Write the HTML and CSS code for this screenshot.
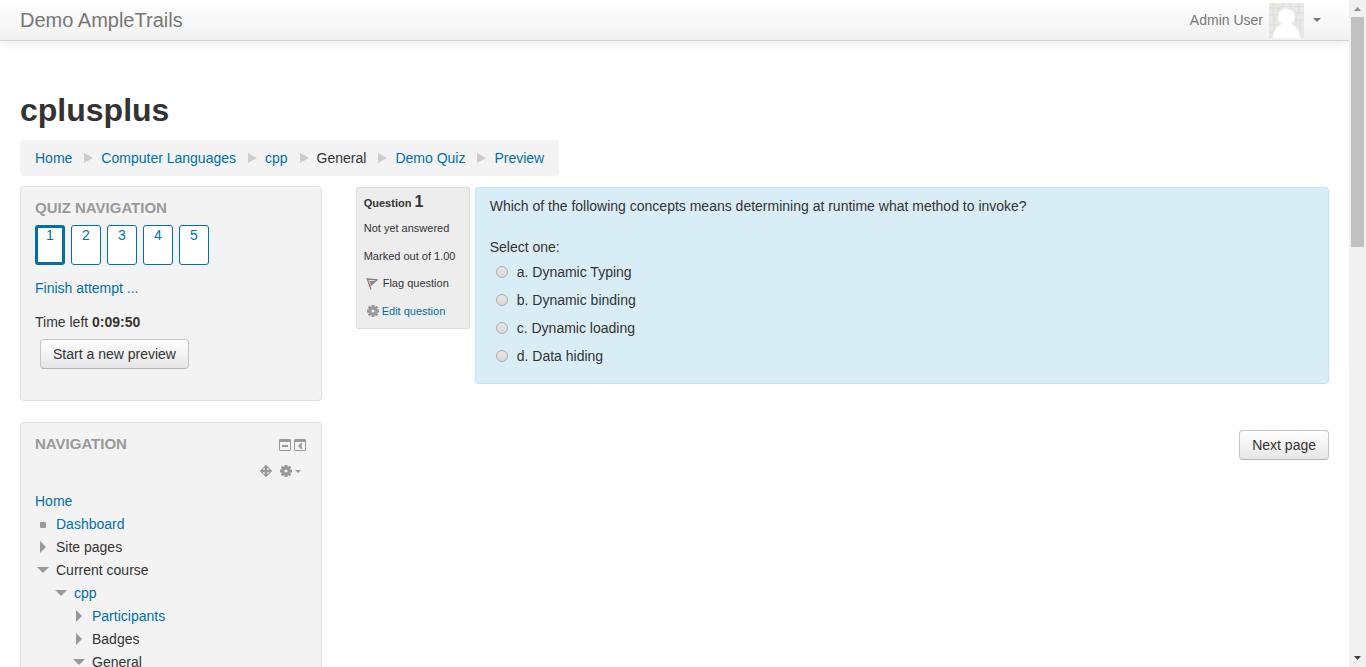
FILE: index.html
```
<!DOCTYPE html>
<html lang="en">
<head>
    <meta charset="UTF-8">
    <meta name="viewport" content="width=device-width, initial-scale=1.0">
    <title>Demo Quiz</title>
    <link rel="stylesheet" href="styles.css">
</head>
<body>
    <div class="page">
        <header class="navbar">
            <a class="brand" href="#">Demo AmpleTrails</a>
            <a class="usermenu" href="#">
                <span>Admin User</span>
                <svg class="avatar" width="35" height="35" viewBox="0 0 35 35">
                    <rect width="35" height="35" fill="#e8e8e7"/>
                    <path d="M0 5h13M4 0v12M0 12h9M9 5v7M0 22h8M5 12v16M26 4h9M30 0v10M25 10h10M27 10v12M27 17h8M31 17v10M0 29h6M14 0v4M21 0v5" fill="none" stroke="#dcdcdb"/>
                    <path d="M4 35c0-7 4-12 9-14-2-1-4-4-4-7 0-5 4-8 8.500-8s8.500 3 8.500 8c0 3-2 6-4 7 5 2 9 7 9 14z" fill="#fff"/>
                </svg>
                <span class="caret"></span>
            </a>
        </header>

        <div class="content">
            <h1>cplusplus</h1>
            <nav>
                <ul class="breadcrumb">
                    <li><a href="#">Home</a></li>
                    <li><a href="#">Computer Languages</a></li>
                    <li><a href="#">cpp</a></li>
                    <li>General</li>
                    <li><a href="#">Demo Quiz</a></li>
                    <li><a href="#">Preview</a></li>
                </ul>
            </nav>

            <div class="columns">
                <aside>
                    <section class="block quiz-nav">
                        <h2>QUIZ NAVIGATION</h2>
                        <div class="qn-buttons">
                            <a class="thispage" href="#">1</a>
                            <a href="#">2</a>
                            <a href="#">3</a>
                            <a href="#">4</a>
                            <a href="#">5</a>
                        </div>
                        <a class="finish" href="#">Finish attempt ...</a>
                        <p class="timer">Time left <strong>0:09:50</strong></p>
                        <button class="btn" type="button">Start a new preview</button>
                    </section>

                    <section class="block">
                        <div class="block-header">
                            <h2>NAVIGATION</h2>
                            <div class="block-actions">
                                <a href="#" aria-label="Hide block">
                                    <svg width="12" height="12" viewBox="0 0 12 12"><path d="M1 0h10l1 1v10l-1 1H1l-1-1V1zM1 3v8h10V3zM3 6h6v2H3z" fill="#999" fill-rule="evenodd"/></svg>
                                </a>
                                <a href="#" aria-label="Dock block">
                                    <svg width="12" height="12" viewBox="0 0 12 12"><path d="M1 0h10l1 1v10l-1 1H1l-1-1V1zM1 3v8h10V3zM8 4v2L7 7l1 1v2H7L4 7l3-3z" fill="#999" fill-rule="evenodd"/></svg>
                                </a>
                            </div>
                        </div>
                        <div class="block-commands">
                            <a href="#" aria-label="Move block">
                                <svg width="12" height="12" viewBox="0 0 12 12"><path d="M6 0l3 3H7v2h2V3l3 3-3 3V7H7v2h2l-3 3-3-3h2V7H3v2L0 6l3-3v2h2V3H3z" fill="#999" stroke="#999" stroke-width=".4"/></svg>
                            </a>
                            <a class="cog" href="#" aria-label="Actions">
                                <svg width="12" height="12" viewBox="0 0 12 12"><path d="M4.500 0h3v1.500l.8.3L9.500.8l1.700 1.700-1 1.200.3.800H12v3h-1.500l-.3.8 1 1.200-1.700 1.700-1.200-1-.8.3V12h-3v-1.500l-.8-.3-1.200 1L.8 9.500l1-1.200-.3-.8H0v-3h1.500l.3-.8-1-1.200L2.500.8l1.200 1 .8-.3zM6 4.400a1.600 1.600 0 1 0 0 3.200 1.600 1.600 0 0 0 0-3.200z" fill="#999" fill-rule="evenodd"/></svg>
                                <span class="caret small"></span>
                            </a>
                        </div>
                        <ul class="tree">
                            <li><a href="#">Home</a>
                                <ul>
                                    <li class="leaf"><a href="#">Dashboard</a></li>
                                    <li class="closed">Site pages</li>
                                    <li class="open">Current course
                                        <ul>
                                            <li class="open"><a href="#">cpp</a>
                                                <ul>
                                                    <li class="closed"><a href="#">Participants</a></li>
                                                    <li class="closed">Badges</li>
                                                    <li class="open">General</li>
                                                </ul>
                                            </li>
                                        </ul>
                                    </li>
                                </ul>
                            </li>
                        </ul>
                    </section>
                </aside>

                <main>
                    <form>
                        <div class="question">
                            <div class="info">
                                <h3>Question <span>1</span></h3>
                                <p>Not yet answered</p>
                                <p>Marked out of 1.00</p>
                                <p class="with-icon flag">
                                    <svg width="12" height="13" viewBox="0 0 12 13"><path d="M1 1l4 11.500M1 2l10 .8-6.500 5.700M3.500 4.500l3.500.2-2.500 2" fill="none" stroke="#847d7d" stroke-width="1.300"/></svg>
                                    Flag question
                                </p>
                                <p class="with-icon">
                                    <svg width="12" height="12" viewBox="0 0 12 12"><path d="M4.500 0h3v1.500l.8.3L9.500.8l1.700 1.700-1 1.200.3.800H12v3h-1.500l-.3.8 1 1.200-1.700 1.700-1.200-1-.8.3V12h-3v-1.500l-.8-.3-1.200 1L.8 9.500l1-1.200-.3-.8H0v-3h1.500l.3-.8-1-1.200L2.500.8l1.200 1 .8-.3zM6 4.400a1.600 1.600 0 1 0 0 3.200 1.600 1.600 0 0 0 0-3.200z" fill="#999" fill-rule="evenodd"/></svg>
                                    <a href="#">Edit question</a>
                                </p>
                            </div>
                            <fieldset class="formulation">
                                <p class="qtext">Which of the following concepts means determining at runtime what method to invoke?</p>
                                <p class="prompt">Select one:</p>
                                <div class="answer">
                                    <label><input type="radio" name="answer"> a. Dynamic Typing</label>
                                    <label><input type="radio" name="answer"> b. Dynamic binding</label>
                                    <label><input type="radio" name="answer"> c. Dynamic loading</label>
                                    <label><input type="radio" name="answer"> d. Data hiding</label>
                                </div>
                            </fieldset>
                        </div>
                        <div class="submitbtns">
                            <button class="btn" type="button">Next page</button>
                        </div>
                    </form>
                </main>
            </div>
        </div>
    </div>

    <div class="scrollbar">
        <svg width="17" height="17" viewBox="0 0 17 17"><path d="M5 11l3.500-4 3.500 4z" fill="#8b8b8b"/></svg>
        <div class="thumb"></div>
        <svg width="17" height="17" viewBox="0 0 17 17"><path d="M5 6l3.500 4L12 6z" fill="#404040"/></svg>
    </div>
</body>
</html>
```
FILE: styles.css
```
* {
    box-sizing: border-box;
}
body {
    display: flex;
    height: 100vh;
    margin: 0;
    overflow: hidden;
    font-family: "Liberation Sans", Arial, sans-serif;
    font-size: 14px;
    line-height: 20px;
    color: #333;
    background-color: #fff;
}
h1, h2, h3, p, ul {
    margin: 0;
    padding: 0;
}
ul {
    list-style: none;
}
a {
    color: #0070a8;
    text-decoration: none;
}
svg {
    display: block;
    flex: none;
}
.page {
    flex: 1;
    min-width: 0;
    overflow: hidden;
}

/* top bar */
.navbar {
    display: flex;
    justify-content: space-between;
    align-items: center;
    height: 41px;
    padding: 0 28px 0 20px;
    background-image: linear-gradient(#fff, #f2f2f2);
    border-bottom: 1px solid #d4d4d4;
    box-shadow: 0 1px 10px rgba(0, 0, 0, 0.1);
}
.brand {
    font-size: 20px;
    color: #777;
}
.usermenu {
    display: flex;
    align-items: center;
    gap: 6px;
    color: #777;
}
.caret {
    margin-left: 3px;
    border: 4px solid transparent;
    border-top-color: #777;
    border-bottom: 0;
}
.caret.small {
    margin-left: 0;
    border-width: 3px 3px 0;
    border-top-color: #999;
}

.content {
    padding: 49px 20px 20px;
}
h1 {
    margin-bottom: 10px;
    font-size: 32px;
    line-height: 40px;
}
.breadcrumb {
    display: inline-flex;
    padding: 8px 15px;
    background-color: #f3f3f3;
    border-radius: 4px;
    vertical-align: top;
}
.breadcrumb li {
    display: flex;
    align-items: center;
}
.breadcrumb li + li::before {
    content: "";
    margin: 0 8px 0 12px;
    border: 5px solid transparent;
    border-left: 9px solid #ccc;
    border-right: 0;
}
.columns {
    display: grid;
    grid-template-columns: 31fr 100fr;
    gap: 34px;
    margin-top: 10px;
}

/* side blocks */
.block {
    padding: 11px 14px 31px;
    margin-bottom: 21px;
    background-color: #f3f3f3;
    border: 1px solid #e0e0e0;
    border-radius: 4px;
}
.block h2 {
    font-size: 15px;
    line-height: 20px;
    color: #999;
}
.qn-buttons {
    display: flex;
    gap: 6px;
    margin: 7px 0 13px;
}
.qn-buttons a {
    width: 30px;
    height: 40px;
    line-height: 18px;
    text-align: center;
    background-color: #fff;
    border: 1px solid #0070a8;
    border-radius: 3px;
}
.qn-buttons .thispage {
    line-height: 14px;
    border-width: 3px;
}
.finish {
    display: block;
}
.timer {
    margin: 14px 0 7px;
}
.quiz-nav .btn {
    margin-left: 5px;
}
.btn {
    display: block;
    height: 30px;
    padding: 0 12px;
    font: inherit;
    color: #333;
    background-image: linear-gradient(#fff, #e6e6e6);
    border: 1px solid #c5c5c5;
    border-bottom-color: #b3b3b3;
    border-radius: 4px;
    cursor: pointer;
}
.block-header {
    display: flex;
    justify-content: space-between;
    align-items: center;
}
.block-actions {
    display: flex;
    gap: 3px;
    padding: 2px 1px 0 0;
}
.block-commands {
    display: flex;
    justify-content: flex-end;
    align-items: center;
    gap: 8px;
    height: 20px;
    margin: 7px 6px 9px 0;
}
.cog {
    display: flex;
    align-items: center;
    gap: 3px;
}

/* navigation tree */
.tree {
    line-height: 23px;
}
.tree ul ul {
    margin-left: -3px;
}
.tree li li {
    padding-left: 21px;
}
.tree li li::before {
    content: "";
    float: left;
    margin-left: -21px;
}
.tree .leaf::before {
    width: 6px;
    height: 6px;
    margin: 9px 0 0 -16px;
    background-color: #999;
    border-radius: 1px;
}
.tree .closed::before {
    margin: 5px 0 0 -16px;
    border: 6px solid transparent;
    border-left-color: #999;
    border-right: 0;
}
.tree .open::before {
    margin: 8px 0 0 -19px;
    border: 6px solid transparent;
    border-top-color: #999;
    border-bottom: 0;
}

/* question */
main {
    padding-top: 1px;
}
.question {
    display: flex;
    align-items: flex-start;
    gap: 5px;
}
.info {
    flex: none;
    width: 114px;
    padding: 4px 7px 7px;
    font-size: 11px;
    line-height: 20px;
    background-color: #ededed;
    border: 1px solid #dcdcdc;
    border-radius: 2px;
}
.info h3 {
    height: 20px;
    margin-bottom: 6px;
    font-size: 11px;
    line-height: 20px;
}
.info h3 span {
    font-size: 16px;
}
.info p + p {
    margin-top: 8px;
}
.info .with-icon {
    display: flex;
    align-items: center;
    gap: 3px;
    padding-left: 3px;
}
.info .flag {
    gap: 5px;
    padding-left: 2px;
    margin-top: 7px;
}
.formulation {
    flex: 1;
    min-width: 0;
    margin: 0;
    padding: 8px 14px 17px;
    background-color: #d9edf7;
    border: 1px solid #bce8f1;
    border-radius: 4px;
}
.prompt {
    margin: 21px 0 5px;
}
.answer {
    display: grid;
    gap: 8px;
    padding-left: 6px;
    justify-items: start;
}
.answer label {
    display: flex;
    align-items: center;
    gap: 9px;
}
.answer input {
    appearance: none;
    width: 12px;
    height: 12px;
    margin: 0;
    background-image: linear-gradient(#e6e6e6, #dadada);
    border: 1px solid #aaa;
    border-radius: 50%;
}
.answer input:checked {
    background-image: radial-gradient(#444 35%, #ddd 40%);
}
.submitbtns {
    display: flex;
    justify-content: flex-end;
    margin-top: 46px;
}

/* window scroll bar */
.scrollbar {
    display: flex;
    flex-direction: column;
    flex: none;
    width: 17px;
    background-color: #f1f1f1;
}
.scrollbar .thumb {
    height: 230px;
    margin: 0 2px auto;
    background-color: #c1c1c1;
}
```
